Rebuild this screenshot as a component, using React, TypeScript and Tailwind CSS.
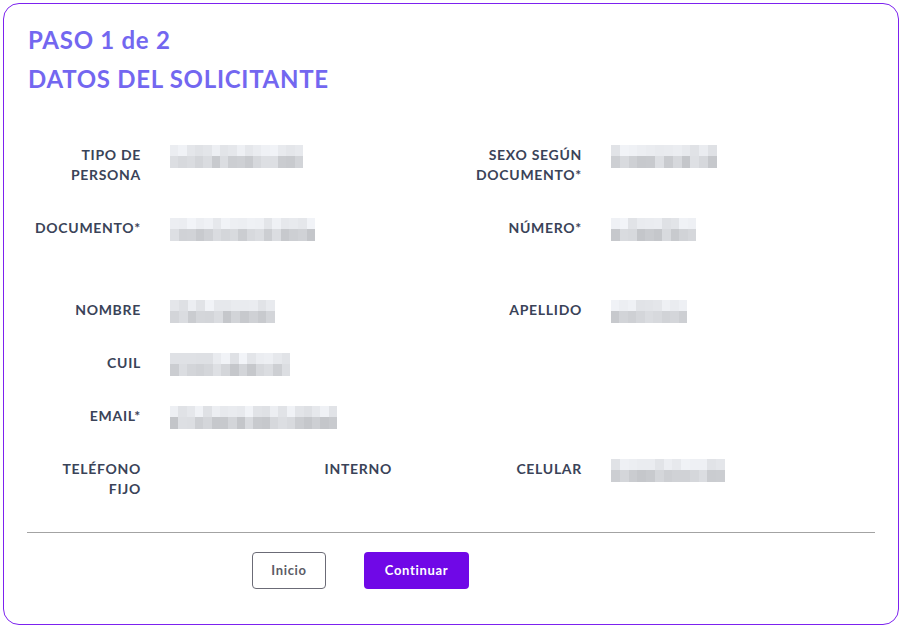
import { ReactNode } from 'react';

// deterministic shades for the pixelated (blurred) field values
function shades(seed: number, count: number, min: number, max: number) {
  const out: string[] = [];
  let s = seed;
  for (let i = 0; i < count; i++) {
    s = (s * 9301 + 49297) % 233280;
    const v = Math.round(min + ((max - min) * s) / 233280);
    out.push(`rgb(${v - 4}, ${v - 2}, ${v + 2})`);
  }
  return out;
}

function Masked({ width, seed }: { width: number; seed: number }) {
  const cells = Math.max(1, Math.round(width / 8.5));
  const top = shades(seed, cells, 226, 246);
  const bottom = shades(seed + 7, cells, 198, 226);
  return (
    <div className="flex flex-col h-[23px] -mb-[3px] overflow-hidden" style={{ width }}>
      <div className="flex h-[11px]">
        {top.map((c, i) => (
          <div key={i} className="flex-1 h-full" style={{ backgroundColor: c }} />
        ))}
      </div>
      <div className="flex h-[12px]">
        {bottom.map((c, i) => (
          <div key={i} className="flex-1 h-full" style={{ backgroundColor: c }} />
        ))}
      </div>
    </div>
  );
}

function Label({ children }: { children: ReactNode }) {
  return (
    <div className="text-right text-[14px] leading-[20px] font-bold uppercase text-[#3a4358] tracking-[0.05em]">
      {children}
    </div>
  );
}

interface RowProps {
  label: ReactNode;
  value?: ReactNode;
  label2?: ReactNode;
  value2?: ReactNode;
  className?: string;
}

function Row({ label, value, label2, value2, className = '' }: RowProps) {
  return (
    <div className={`grid grid-cols-[113px_270px_113px_1fr] gap-x-[29px] items-start ${className}`}>
      <Label>{label}</Label>
      <div>{value}</div>
      {label2 ? <Label>{label2}</Label> : <div />}
      <div>{value2}</div>
    </div>
  );
}

export default function App() {
  return (
    <div className="w-[903px] h-[628px] bg-white font-['Lato','Liberation_Sans',sans-serif] pt-[3px] pl-[3px]">
      <div className="w-[896px] h-[622px] border border-[#7c22ef] rounded-2xl bg-white px-6 pt-4">
        {/* Header */}
        <div className="text-[#7367f0] font-bold text-[24px] leading-[39px] tracking-[0.03em]">
          <div>PASO 1 de 2</div>
          <div>DATOS DEL SOLICITANTE</div>
        </div>

        {/* Applicant data */}
        <div className="mt-[47px] flex flex-col gap-y-[33px]">
          <Row
            label={<>TIPO DE<br />PERSONA</>}
            value={<Masked width={133} seed={11} />}
            label2={<>SEXO SEGÚN<br />DOCUMENTO*</>}
            value2={<Masked width={106} seed={23} />}
          />
          <Row
            label="DOCUMENTO*"
            value={<Masked width={145} seed={37} />}
            label2="NÚMERO*"
            value2={<Masked width={85} seed={41} />}
          />
          <Row
            className="mt-[29px]"
            label="NOMBRE"
            value={<Masked width={105} seed={53} />}
            label2="APELLIDO"
            value2={<Masked width={76} seed={67} />}
          />
          <Row label="CUIL" value={<Masked width={120} seed={71} />} />
          <Row label="EMAIL*" value={<Masked width={167} seed={89} />} />
          <Row
            label={<>TELÉFONO<br />FIJO</>}
            value={
              <div className="w-[222px]">
                <Label>INTERNO</Label>
              </div>
            }
            label2="CELULAR"
            value2={<Masked width={114} seed={97} />}
          />
        </div>

        <div className="mt-[33px] border-t border-[#a3a3a3] -mx-px" />

        {/* Actions */}
        <div className="mt-[19px] flex gap-[38px] pl-[224px]">
          <button className="h-[37px] w-[74px] rounded border border-[#6b6b76] text-[13px] font-bold text-[#5b5b66] tracking-[0.05em]">
            Inicio
          </button>
          <button className="h-[37px] w-[105px] rounded bg-[#7008e7] text-[13px] font-bold text-white tracking-[0.05em]">
            Continuar
          </button>
        </div>
      </div>
    </div>
  );
}
